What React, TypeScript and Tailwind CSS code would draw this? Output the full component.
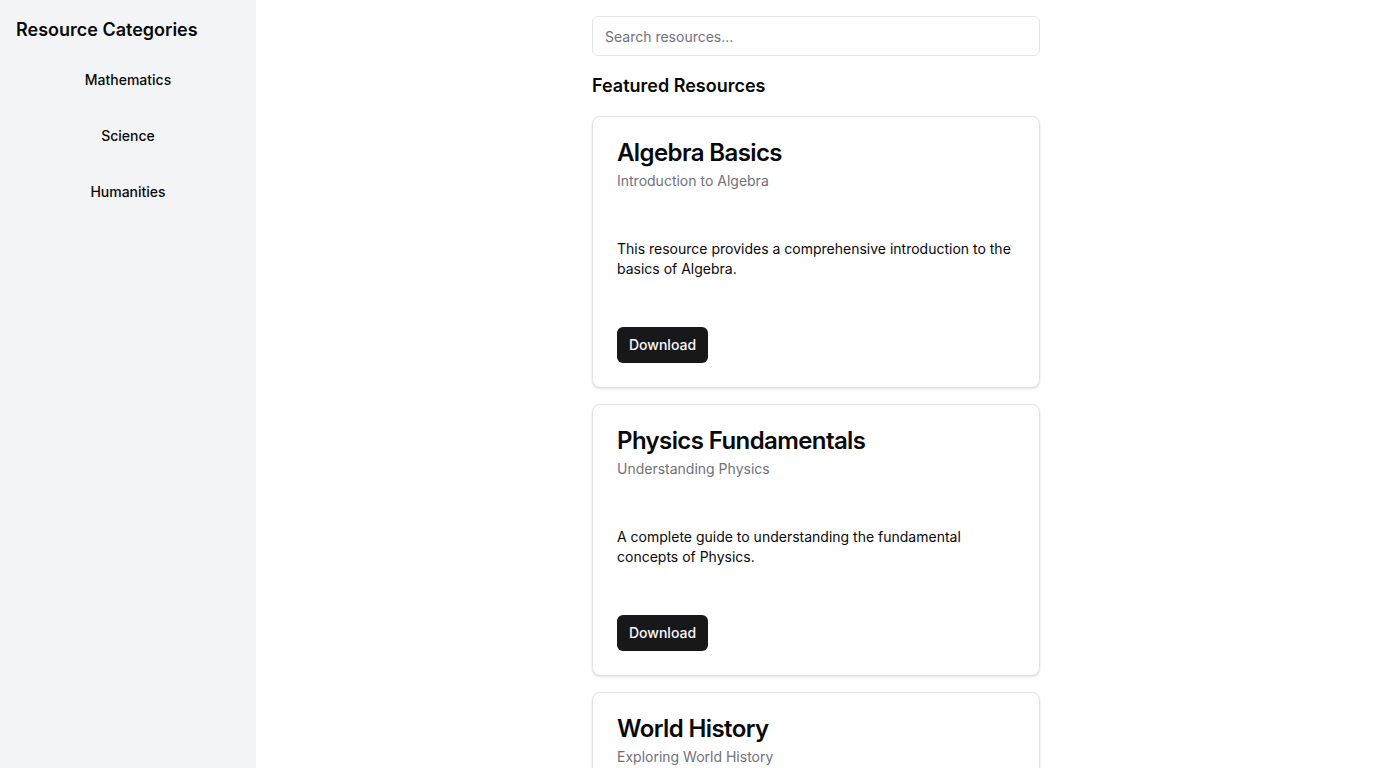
import { Search } from 'lucide-react';

type Resource = {
  title: string;
  subtitle: string;
  body: string;
};

const categories = ['Mathematics', 'Science', 'Humanities'];

const resources: Resource[] = [
  {
    title: 'Algebra Basics',
    subtitle: 'Introduction to Algebra',
    body: 'This resource provides a comprehensive introduction to the basics of Algebra.',
  },
  {
    title: 'Physics Fundamentals',
    subtitle: 'Understanding Physics',
    body: 'A complete guide to understanding the fundamental concepts of Physics.',
  },
  {
    title: 'World History',
    subtitle: 'Exploring World History',
    body: 'An engaging exploration of the major events that shaped World History.',
  },
];

function ResourceCard({ title, subtitle, body }: Resource) {
  return (
    <div className="rounded-lg border border-[#e4e4e7] bg-white text-[#09090b] shadow-sm">
      <div className="flex flex-col gap-1.5 p-6">
        <h3 className="text-2xl leading-6 font-semibold tracking-tight">{title}</h3>
        <p className="text-sm leading-5 text-[#71717a]">{subtitle}</p>
      </div>
      <div className="p-6">
        <p className="text-sm leading-5">{body}</p>
      </div>
      <div className="flex items-center p-6">
        <button
          type="button"
          className="inline-flex h-9 items-center justify-center rounded-md bg-[#18181b] px-3 text-sm font-medium text-[#fafafa]">
          Download
        </button>
      </div>
    </div>
  );
}

export default function App() {
  // search icon kept imported but unused in the reference look
  void Search;

  return (
    <div className="flex min-h-screen bg-white font-['Inter',sans-serif] text-[#09090b]">
      <aside className="w-64 shrink-0 bg-[#f3f4f6] p-4">
        <h2 className="text-lg leading-7 font-semibold">Resource Categories</h2>
        <nav className="mt-4 flex flex-col gap-4">
          {categories.map((c) => (
            <button
              key={c}
              type="button"
              className="inline-flex h-10 w-full items-center justify-center rounded-md px-4 text-sm font-medium">
              {c}
            </button>
          ))}
        </nav>
      </aside>

      <main className="flex-1 p-4">
        <div className="mx-auto w-full max-w-md">
          <input
            type="text"
            placeholder="Search resources..."
            className="flex h-10 w-full rounded-md border border-[#e4e4e7] bg-white px-3 text-sm outline-none placeholder:text-[#71717a]"
          />
          <h2 className="mt-4 text-lg leading-7 font-semibold">Featured Resources</h2>
          <div className="mt-4 flex flex-col gap-4">
            {resources.map((r) => (
              <ResourceCard key={r.title} {...r} />
            ))}
          </div>
        </div>
      </main>
    </div>
  );
}
